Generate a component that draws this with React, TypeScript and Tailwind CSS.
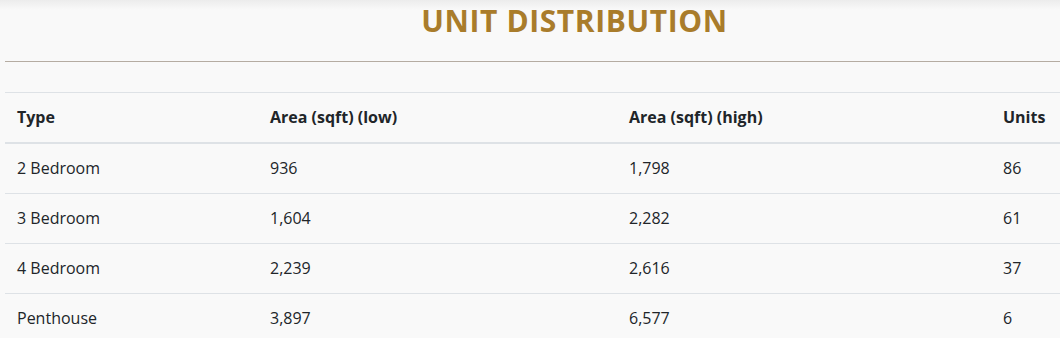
const rows = [
  { type: '2 Bedroom', low: '936', high: '1,798', units: '86' },
  { type: '3 Bedroom', low: '1,604', high: '2,282', units: '61' },
  { type: '4 Bedroom', low: '2,239', high: '2,616', units: '37' },
  { type: 'Penthouse', low: '3,897', high: '6,577', units: '6' },
];

export default function App() {
  return (
    <div className="w-[1060px] h-[338px] overflow-hidden bg-[#f9f9f9] text-[#212529] font-['Open_Sans','Noto_Sans',sans-serif]">
      <div className="bg-[linear-gradient(to_bottom,#ececec,#f9f9f9_10px)]">
        <div className="ml-[5px] w-[1139px]">
          <h2 className="h-[61px] text-center text-[30px] leading-[42px] font-bold tracking-[0.6px] text-[#a97c2b]">
            UNIT DISTRIBUTION
          </h2>
          <div className="h-px bg-[#b5aca2]" />
        </div>
      </div>

      <div className="ml-[5px] mt-[30px] w-[1139px]">
        <table className="w-full table-fixed border-collapse text-[16px] leading-[25px]">
          <colgroup>
            <col className="w-[253px]" />
            <col className="w-[359px]" />
            <col className="w-[374px]" />
            <col />
          </colgroup>
          <thead>
            <tr className="border-t border-[#dee2e6] border-b-2">
              <th className="p-3 text-left font-bold">Type</th>
              <th className="p-3 text-left font-bold">Area (sqft) (low)</th>
              <th className="p-3 text-left font-bold">Area (sqft) (high)</th>
              <th className="p-3 text-left font-bold">Units</th>
            </tr>
          </thead>
          <tbody>
            {rows.map(r => (
              <tr key={r.type} className="border-b border-[#dee2e6]">
                <td className="p-3">{r.type}</td>
                <td className="p-3">{r.low}</td>
                <td className="p-3">{r.high}</td>
                <td className="p-3">{r.units}</td>
              </tr>
            ))}
          </tbody>
        </table>
      </div>
    </div>
  );
}
